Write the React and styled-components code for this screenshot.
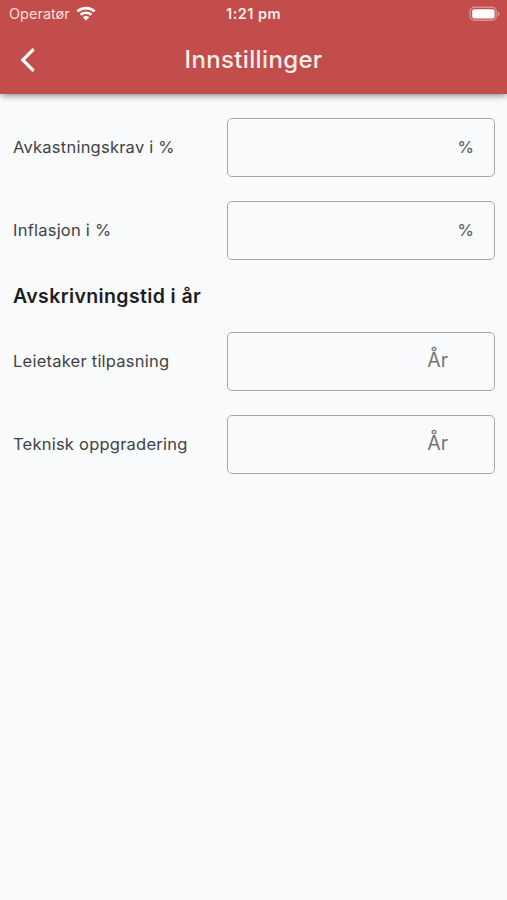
import { useState } from 'react'
import { createGlobalStyle, styled } from 'styled-components'

const percentFields = [
  { id: 'yield', label: 'Avkastningskrav i %' },
  { id: 'inflation', label: 'Inflasjon i %' },
]

const yearFields = [
  { id: 'tenant', label: 'Leietaker tilpasning' },
  { id: 'technical', label: 'Teknisk oppgradering' },
]

const WifiIcon = () => (
  <svg width="20" height="15" viewBox="0 0 20 15" fill="none">
    <path
      d="M1.4 5.4C6.2 1 13.8 1 18.6 5.4M4.6 8.8c3-2.7 7.8-2.7 10.8 0"
      stroke="#fff"
      strokeWidth="2.6"
    />
    <path d="M10 14.5 6.7 11.2c1.8-1.6 4.8-1.6 6.6 0Z" fill="#fff" />
  </svg>
)

const BatteryIcon = () => (
  <svg width="32" height="16" viewBox="0 0 32 16" fill="none">
    <rect
      x="1.2"
      y="1.2"
      width="26"
      height="13.1"
      rx="4"
      stroke="#fff"
      strokeOpacity=".4"
      strokeWidth="1.4"
    />
    <rect x="3.2" y="3.2" width="22.4" height="9.2" rx="2" fill="#fff" />
    <path d="M28.8 5.4c2.3.8 2.3 4 0 4.8Z" fill="#fff" fillOpacity=".45" />
  </svg>
)

const BackIcon = () => (
  <svg width="16" height="26" viewBox="0 0 16 26" fill="none">
    <path d="M13.6 2.2 2.8 13l10.8 10.8" stroke="#fff" strokeWidth="3.2" />
  </svg>
)

const SettingRow = ({ field, suffix, value, onChange }) => (
  <Row>
    <Label htmlFor={field.id}>{field.label}</Label>
    <Field>
      <Input
        id={field.id}
        type="text"
        inputMode="decimal"
        value={value}
        onChange={(e) => onChange(field.id, e.target.value)}
      />
      {suffix === '%' ? <Percent>%</Percent> : <Unit>{suffix}</Unit>}
    </Field>
  </Row>
)

export default function App() {
  const [values, setValues] = useState({})

  const changeHandler = (id, value) => {
    setValues({ ...values, [id]: value })
  }

  return (
    <Screen>
      <GlobalStyle />
      <Header>
        <StatusBar>
          <Carrier>
            Operatør
            <WifiIcon />
          </Carrier>
          <Time>1:21 pm</Time>
          <Battery>
            <BatteryIcon />
          </Battery>
        </StatusBar>
        <NavBar>
          <BackButton aria-label="Tilbake">
            <BackIcon />
          </BackButton>
          <Title>Innstillinger</Title>
        </NavBar>
      </Header>
      <Main>
        <Group>
          {percentFields.map((field) => (
            <SettingRow
              key={field.id}
              field={field}
              suffix="%"
              value={values[field.id] ?? ''}
              onChange={changeHandler}
            />
          ))}
        </Group>
        <Heading>Avskrivningstid i år</Heading>
        <Group>
          {yearFields.map((field) => (
            <SettingRow
              key={field.id}
              field={field}
              suffix="År"
              value={values[field.id] ?? ''}
              onChange={changeHandler}
            />
          ))}
        </Group>
      </Main>
    </Screen>
  )
}

const GlobalStyle = createGlobalStyle`
  * {
    box-sizing: border-box;
  }

  body {
    margin: 0;
    background: #f9fafc;
    font-family: Inter, 'Liberation Sans', sans-serif;
  }
`

const Screen = styled.div`
  min-height: 100vh;
  background: #f9fafc;
`

const Header = styled.header`
  height: 94px;
  background: #c24d4a;
  color: #fff;
  box-shadow: 0 3px 6px -1px rgba(0, 0, 0, 0.42);
`

const StatusBar = styled.div`
  display: grid;
  grid-template-columns: 1fr auto 1fr;
  align-items: center;
  height: 27px;
  padding: 0 6px 0 9px;
`

const Carrier = styled.div`
  display: flex;
  align-items: center;
  gap: 6px;
  font-size: 14.5px;
  color: #f9dfdc;
`

const Time = styled.div`
  margin-right: 3px;
  font-size: 14.5px;
  font-weight: 600;
  letter-spacing: 0.45px;
  color: #fdeeec;
`

const Battery = styled.div`
  display: flex;
  justify-content: flex-end;
`

const NavBar = styled.div`
  display: grid;
  grid-template-columns: 56px 1fr 56px;
  align-items: center;
  height: 65px;
`

const BackButton = styled.button`
  display: flex;
  padding: 0 0 0 20px;
  border: none;
  background: none;
  cursor: pointer;
`

const Title = styled.h1`
  margin: 0;
  font-size: 24px;
  font-weight: 500;
  line-height: 30px;
  letter-spacing: 0.35px;
  text-align: center;
  color: #fdeeec;
`

const Main = styled.main`
  padding: 24px 12px 0 13px;
`

const Group = styled.section`
  display: flex;
  flex-direction: column;
  gap: 24px;
`

const Row = styled.div`
  display: grid;
  grid-template-columns: 1fr 268px;
  align-items: center;
`

const Label = styled.label`
  padding-bottom: 2px;
  font-size: 16.5px;
  line-height: 24px;
  letter-spacing: 0.23px;
  color: #424344;
`

const Field = styled.div`
  display: flex;
  align-items: center;
  height: 59px;
  padding-left: 16px;
  border: 1.5px solid #a6a8a9;
  border-radius: 5px;
`

const Input = styled.input`
  flex: 1;
  min-width: 0;
  border: none;
  outline: none;
  background: none;
  font: inherit;
  font-size: 20px;
`

const Percent = styled.span`
  margin-right: 20px;
  padding-bottom: 2px;
  font-size: 16.5px;
  font-weight: 500;
  color: #636465;
`

const Unit = styled.span`
  margin-right: 46px;
  padding-bottom: 4px;
  font-size: 19.5px;
  line-height: 24px;
  color: #747576;
`

const Heading = styled.h2`
  margin: 23px 0;
  font-size: 19.5px;
  font-weight: 600;
  line-height: 26px;
  letter-spacing: 0.38px;
  color: #1c1d1e;
`
